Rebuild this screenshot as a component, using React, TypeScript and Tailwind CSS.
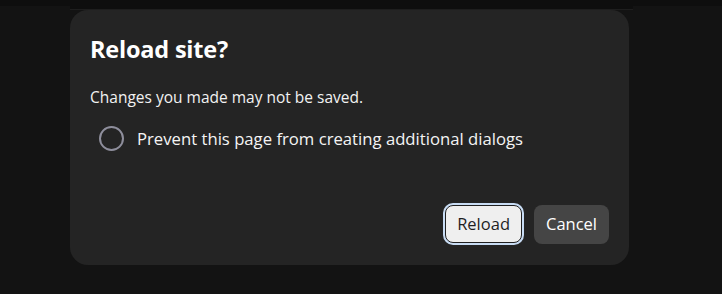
export default function App() {
  return (
    <div
      className="w-[722px] h-[294px] bg-[#131313] overflow-hidden flex flex-col"
      style={{ fontFamily: '"Open Sans", "Noto Sans", sans-serif' }}
    >
      {/* top strip */}
      <div className="h-[6px] w-full bg-[#0e0e0e] shrink-0" />

      <div className="flex-1 flex">
        <div className="ml-[70px] w-[563px] flex flex-col">
          <div className="h-[3px] bg-[#0e0e0e]" />
          <div className="h-px bg-[#1e1e1e]" />

          {/* Dialog */}
          <div className="w-[559px] h-[255px] bg-[#242424] rounded-[18px] flex flex-col px-5 pt-[23px] pb-[21px]">
            <h1 className="text-[23.5px] leading-[32px] font-bold text-white tracking-[-0.2px]">
              Reload site?
            </h1>

            <p className="mt-[21px] text-[15.5px] leading-[22px] text-[#f2f2f2]">
              Changes you made may not be saved.
            </p>

            <label className="mt-[18px] flex items-center gap-[13px] pl-[9px]">
              <span className="w-[25px] h-[25px] rounded-full border-2 border-[#8e8e9c]" />
              <span className="text-[16.7px] leading-[24px] text-[#f4f4f4]">
                Prevent this page from creating additional dialogs
              </span>
            </label>

            <div className="mt-auto flex justify-end gap-3">
              <button className="h-[38px] px-[11px] rounded-[8px] bg-[#efefef] text-[#1f1f1f] text-[16.5px] border border-[#202020] ring-2 ring-[#c8dcf4]">
                Reload
              </button>
              <button className="h-[39px] px-[12px] rounded-[8px] bg-[#454545] text-white text-[16.5px]">
                Cancel
              </button>
            </div>
          </div>
        </div>
      </div>
    </div>
  );
}
